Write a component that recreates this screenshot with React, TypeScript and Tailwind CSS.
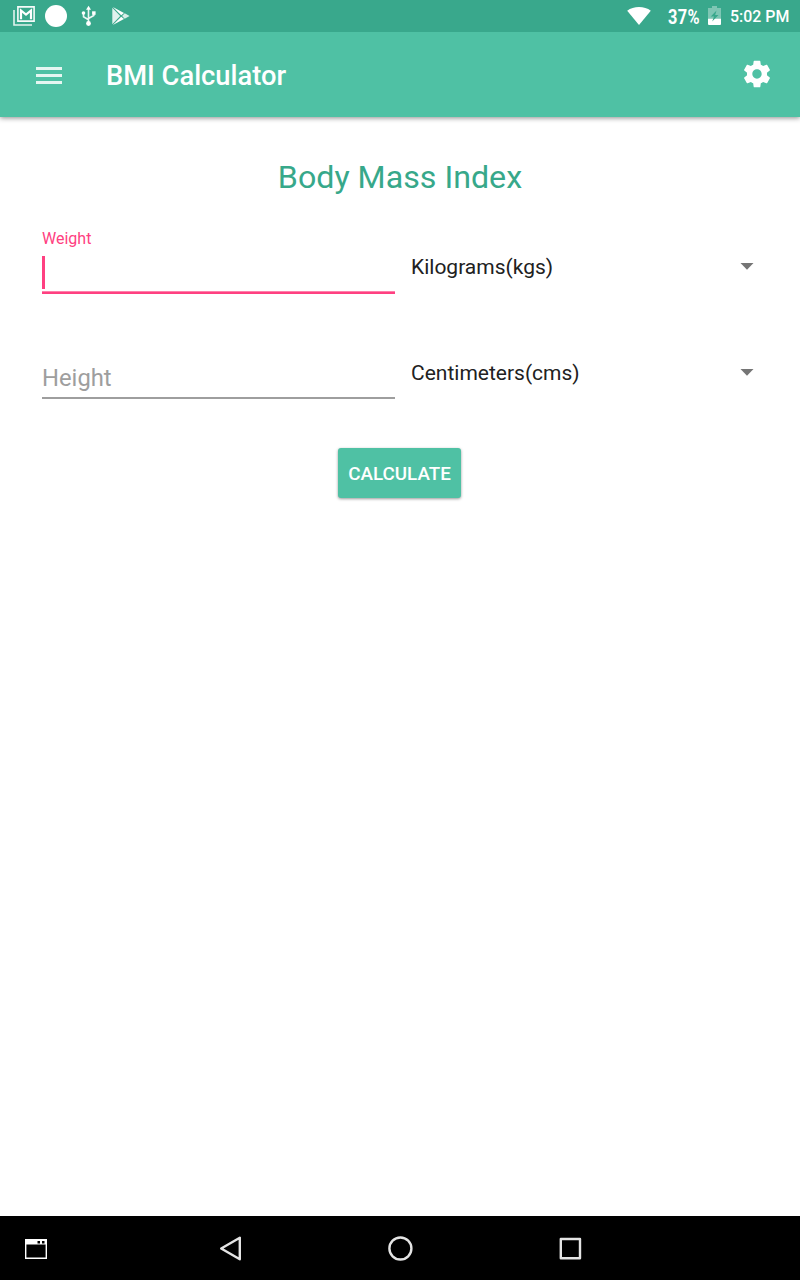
import React, { useState } from 'react';
import { clsx } from 'clsx';

const StatusBar: React.FC = () => (
  <div className="relative z-10 flex h-8 items-center justify-between bg-[#39a88c] text-white">
    {/* Notifications */}
    <div className="flex items-center pl-[13px]">
      <svg width="22" height="20" viewBox="0 0 22 20" fill="none">
        <path d="M1 4V19H19" stroke="#fff" strokeOpacity="0.85" strokeWidth="1.6" />
        <path d="M4.900 0.900H21.100V15.100H4.900Z" stroke="#fff" strokeOpacity="0.95" strokeWidth="1.600" />
        <path d="M8 13.200V4.500L13 8.500L18 4.500V13.200" stroke="#fff" strokeWidth="2.200" />
      </svg>
      <span className="ml-[10px] size-[22px] rounded-full bg-white" />
      <svg className="ml-[14px]" width="16" height="22" viewBox="0 0 16 22" fill="none" stroke="#fff" strokeOpacity="0.9" strokeWidth="1.600">
        <path d="M7.500 4V18M7.500 14.800L2.500 11.800V8M7.500 13.500L12.800 10.500V8" />
        <path d="M7.500 0.800L10 4.800H5Z" fill="#fff" stroke="none" />
        <circle cx="7.500" cy="18.500" r="2.400" fill="#fff" stroke="none" />
        <circle cx="2.500" cy="8" r="1.800" fill="#fff" stroke="none" />
        <path d="M11.100 6.300h3.500v3.500h-3.500z" fill="#fff" stroke="none" />
      </svg>
      <svg className="ml-[15px]" width="18" height="18" viewBox="0 0 18 18" fill="#fff">
        <path d="M0.300 0.800L8.200 9L0.300 17.200Z" fillOpacity="0.85" />
        <path d="M0.800 0L12 6L9.200 8.300Z" />
        <path d="M0.800 18L12 12L9.200 9.700Z" />
        <path d="M12.700 6.300L17.600 9L12.700 11.700L10.100 9Z" fillOpacity="0.8" />
      </svg>
    </div>

    {/* System */}
    <div className="flex items-center pr-[11px]">
      <svg width="24" height="18" viewBox="0 0 24 18" fill="#fff">
        <path d="M12 18L0.200 3.800C6.500-1.200 17.500-1.200 23.800 3.800Z" />
      </svg>
      <span className="ml-[17px] w-8 pt-[3px] font-[Roboto] text-[19.500px] leading-none font-bold whitespace-nowrap">
        <span className="inline-block origin-left scale-x-[0.84] tracking-[0.4px]">37%</span>
      </span>
      <svg className="mr-[9px] mb-[2px] ml-2" width="13" height="19" viewBox="0 0 13 19" fill="#fff">
        <path d="M4 0H9V2H13V12H0V2H4Z" fillOpacity="0.35" />
        <path d="M0 12.500H13V18a1 1 0 0 1-1 1H1a1 1 0 0 1-1-1Z" />
        <path d="M8.500 4.500L2.800 10.500H6L4.200 15.500L10.500 9H7.200Z" fill="#39a88c" />
      </svg>
      <span className="w-[59px] pt-px text-[15.900px] leading-none font-medium whitespace-nowrap">5:02 PM</span>
    </div>
  </div>
);

const AppBar: React.FC = () => (
  <header className="flex h-[85px] items-center bg-[#4fc1a4] pr-[30px] pl-9 text-white shadow-[0_1px_5px_rgba(0,0,0,0.45)]">
    <button aria-label="Menu" className="mt-px flex h-[17px] w-[26px] flex-col justify-between">
      <span className="h-[3px] w-full bg-white/85" />
      <span className="h-[3px] w-full bg-white/85" />
      <span className="h-[3px] w-full bg-white/85" />
    </button>
    <h1 className="ml-11 flex-1 pt-0.5 text-[27.300px] leading-8 font-medium">BMI Calculator</h1>
    <button aria-label="Settings" className="mb-0.5">
      <svg className="-my-1 -mr-[3px] size-8" viewBox="0 0 24 24" fill="currentColor">
        <path d="M19.430 12.980c.04-.32.07-.64.07-.98s-.03-.66-.07-.98l2.110-1.650c.19-.15.24-.42.12-.64l-2-3.460c-.12-.22-.39-.3-.61-.22l-2.490 1c-.52-.4-1.080-.73-1.690-.98l-.38-2.650C14.460 2.180 14.250 2 14 2h-4c-.25 0-.46.18-.49.42l-.38 2.650c-.61.25-1.170.59-1.690.98l-2.490-1c-.23-.09-.49 0-.61.22l-2 3.460c-.13.22-.07.49.12.64l2.110 1.650c-.04.32-.07.65-.07.98s.03.66.07.98l-2.110 1.650c-.19.15-.24.42-.12.64l2 3.460c.12.22.39.3.61.22l2.490-1c.52.4 1.080.73 1.690.98l.38 2.650c.03.24.24.42.49.42h4c.25 0 .46-.18.49-.42l.38-2.650c.61-.25 1.170-.59 1.690-.98l2.490 1c.23.09.49 0 .61-.22l2-3.460c.12-.22.07-.49-.12-.64l-2.110-1.650zM12 15.500c-1.930 0-3.500-1.570-3.500-3.500s1.570-3.500 3.500-3.500 3.500 1.570 3.500 3.500-1.570 3.500-3.500 3.500z" />
      </svg>
    </button>
  </header>
);

interface MeasureRowProps {
  label: string;
  unit: string;
  active: boolean;
  onSelect: () => void;
}

const MeasureRow: React.FC<MeasureRowProps> = ({ label, unit, active, onSelect }) => (
  <div className="flex h-[106px] gap-4">
    <div className="w-[353px]" onClick={onSelect}>
      <div className="h-6 pt-px text-base leading-5 text-[#ff4081]">{active && label}</div>
      <div
        className={clsx(
          'flex',
          active
            ? 'h-[42px] border-b-2 border-[#ff4081] shadow-[inset_0_-1px_0_#ff80ab]'
            : 'h-[41px] border-b-2 border-[#9e9e9e] pt-1'
        )}
      >
        {active ? (
          <span className="mt-1 h-[33px] w-[3px] bg-[#ff4081]" />
        ) : (
          <span className="text-[23.800px] leading-[33px] text-[#9e9e9e]">{label}</span>
        )}
      </div>
    </div>
    <button className="mt-[22px] flex h-8 w-[343px] items-center justify-between text-left text-[21px] leading-8 text-[#212121]">
      <span className="pt-0.5">{unit}</span>
      <svg width="14" height="7" viewBox="0 0 14 7" fill="#757575">
        <path d="M0.500 0H13.500L7 6.700Z" />
      </svg>
    </button>
  </div>
);

const NavBar: React.FC = () => (
  <nav className="flex h-16 items-center bg-black pt-px text-[#e4e4e4]">
    <svg className="ml-[25px]" width="22" height="20" viewBox="0 0 22 20">
      <path d="M0.700 0.700H21.300V19.300H0.700Z" fill="none" stroke="#fff" strokeWidth="1.400" />
      <path d="M0 0H22V5.500H0Z" fill="#fff" />
      <path d="M12.500 2H15V4.500H12.500ZM17 2H19.500V4.500H17Z" fill="#000" />
    </svg>
    <svg className="ml-[171px]" width="26" height="28" viewBox="0 0 26 28" fill="none" stroke="currentColor" strokeWidth="2.400" strokeLinejoin="round">
      <path d="M3.200 13.500L21.800 2.700V24.300Z" />
    </svg>
    <svg className="ml-[143px]" width="26" height="26" viewBox="0 0 26 26" fill="none" stroke="currentColor" strokeWidth="2.400">
      <circle cx="13.400" cy="12.500" r="11" />
    </svg>
    <svg className="ml-[145px]" width="24" height="24" viewBox="0 0 24 24" fill="none" stroke="currentColor" strokeWidth="2.400" strokeLinejoin="round">
      <path d="M2.800 2H22V21.200H2.800Z" />
    </svg>
  </nav>
);

export default function App() {
  const [focused, setFocused] = useState('Weight');

  return (
    <div className="flex h-[1280px] w-[800px] flex-col bg-white font-[Roboto,sans-serif]">
      <StatusBar />
      <AppBar />
      <main className="flex-1 px-[42px] pt-10">
        <h2 className="text-center text-[32.200px] leading-10 text-[#37a88a]">Body Mass Index</h2>
        <div className="mt-[31px]">
          <MeasureRow label="Weight" unit="Kilograms(kgs)" active={focused === 'Weight'} onSelect={() => setFocused('Weight')} />
          <MeasureRow label="Height" unit="Centimeters(cms)" active={focused === 'Height'} onSelect={() => setFocused('Height')} />
        </div>
        <button className="mt-2 ml-[296px] block h-[50px] w-[123px] rounded-[3px] bg-[#4fc1a4] pt-0.5 text-[18.800px] font-medium text-white shadow-[0_1px_3px_rgba(0,0,0,0.4)]">
          CALCULATE
        </button>
      </main>
      <NavBar />
    </div>
  );
}
